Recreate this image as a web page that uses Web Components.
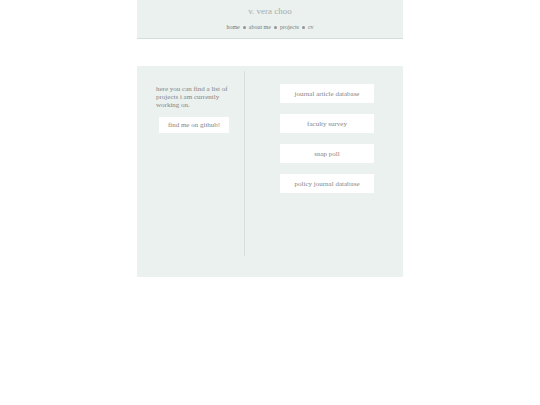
<!DOCTYPE html>
<html lang="en">
<head>
  <meta charset="utf-8">
  <meta name="viewport" content="width=device-width, initial-scale=1">
  <title>v. vera choo</title>
  <style>
    body {
      margin: 0;
      background: #fff;
      color: #858585;
      font-family: "Liberation Serif", serif;
      font-size: 7px;
      line-height: 8px;
    }
  </style>
</head>
<body>
  <projects-page></projects-page>

  <script>
    class SiteHeader extends HTMLElement {
      constructor() {
        super();
        this.shadowDOM = this.attachShadow({mode: 'open'});
      }

      connectedCallback() {
        this.shadowDOM.innerHTML = `
          <style>
            :host {
              display: block;
              padding: 6px 0 8px;
              background: #eaf1ef;
              border-bottom: 1px solid #d3dedb;
              text-align: center;
            }

            h1 {
              margin: 0 0 8px;
              color: #a9acab;
              font-size: 9px;
              font-weight: normal;
              line-height: 10px;
            }

            ul {
              display: flex;
              justify-content: center;
              align-items: center;
              gap: 3px;
              margin: 0;
              padding: 0;
              list-style: none;
              font-size: 6px;
              line-height: 6px;
            }

            li {
              display: flex;
              align-items: center;
              gap: 3px;
            }

            li + li::before {
              content: "";
              width: 3px;
              height: 3px;
              border-radius: 50%;
              background: #909594;
            }

            a {
              color: #777b7a;
              text-decoration: none;
            }
          </style>

          <h1>v. vera choo</h1>
          <nav>
            <ul>
              <li><a href="#home">home</a></li>
              <li><a href="#about">about me</a></li>
              <li><a href="#projects">projects</a></li>
              <li><a href="#cv">cv</a></li>
            </ul>
          </nav>
        `;
      }
    }

    class LinkButton extends HTMLElement {
      constructor() {
        super();
        this.shadowDOM = this.attachShadow({mode: 'open'});
      }

      connectedCallback() {
        this.shadowDOM.innerHTML = `
          <style>
            :host {
              display: block;
            }

            a {
              display: block;
              padding: var(--button-padding, 6px 4px 5px);
              background: #fff;
              color: inherit;
              text-align: center;
              text-decoration: none;
            }
          </style>

          <a href="${this.getAttribute('href')}"><slot></slot></a>
        `;
      }
    }

    class ProjectsPage extends HTMLElement {
      constructor() {
        super();
        this.shadowDOM = this.attachShadow({mode: 'open'});
      }

      connectedCallback() {
        this.shadowDOM.innerHTML = `
          <style>
            :host {
              display: block;
              max-width: 266px;
              margin: 0 auto;
            }

            main {
              display: grid;
              grid-template-columns: 13fr 19fr;
              margin-top: 27px;
              padding: 5px 0 21px;
              background: #eaf1ef;
            }

            aside {
              min-height: 185px;
              box-sizing: border-box;
              padding: 14px 15px 0 19px;
              border-right: 1px solid #d6dfdd;
            }

            p {
              margin: 0 0 8px;
            }

            aside link-button {
              --button-padding: 4px;
              margin: 0 0 0 3px;
            }

            .projects {
              display: flex;
              flex-direction: column;
              gap: 11px;
              padding: 13px 29px 0 35px;
            }
          </style>

          <site-header></site-header>
          <main>
            <aside>
              <p>here you can find a list of projects i am currently working on.</p>
              <link-button href="#github">find me on github!</link-button>
            </aside>
            <section class="projects">
              <link-button href="#journal-articles">journal article database</link-button>
              <link-button href="#faculty-survey">faculty survey</link-button>
              <link-button href="#snap-poll">snap poll</link-button>
              <link-button href="#policy-journals">policy journal database</link-button>
            </section>
          </main>
        `;
      }
    }

    customElements.define('site-header', SiteHeader);
    customElements.define('link-button', LinkButton);
    customElements.define('projects-page', ProjectsPage);
  </script>
</body>
</html>
